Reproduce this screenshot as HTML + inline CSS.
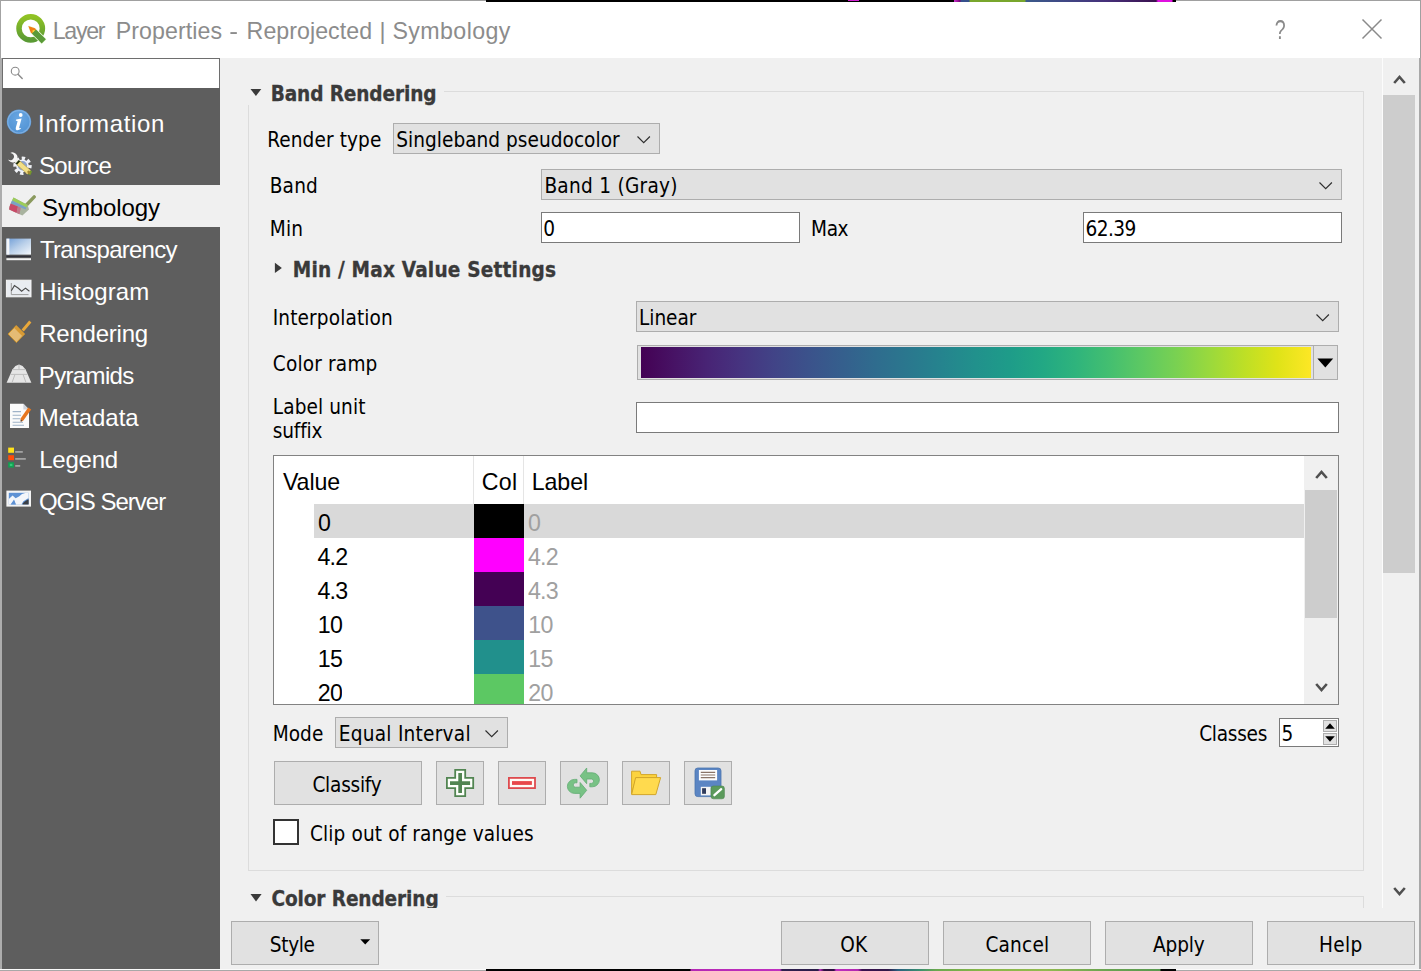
<!DOCTYPE html>
<html lang="en"><head><meta charset="utf-8"><title>Layer Properties - Reprojected | Symbology</title>
<style>
html,body{margin:0;padding:0}
body{width:1421px;height:971px;overflow:hidden;background:#f0f0f0;position:relative;font-family:"DejaVu Sans Condensed","DejaVu Sans","Liberation Sans",sans-serif;color:#000}
.a{position:absolute;box-sizing:border-box}
.t{position:absolute;white-space:nowrap;line-height:1}
.cb{background:#e1e1e1;border:1px solid #adadad}
.in{background:#fff;border:1px solid #7a7a7a}
svg{position:absolute;overflow:visible}
</style></head><body>
<!-- window frame -->
<div class="a" style="left:0;top:0;width:1421px;height:58px;background:#fff"></div>
<div class="a" style="left:0;top:0;width:1421px;height:1px;background:#a0a0a0"></div>
<div class="a" style="left:0;top:0;width:1px;height:58px;background:#a3a3a3"></div>
<div class="a" style="left:1420px;top:0;width:1px;height:58px;background:#a0a0a0"></div>
<div class="a" style="left:0;top:58px;width:2px;height:913px;background:#adadad"></div>
<div class="a" style="left:1419px;top:58px;width:2px;height:913px;background:#a8a8a8"></div>
<div class="a" style="left:0;top:969px;width:1421px;height:1px;background:#fafafa"></div>
<div class="a" style="left:0;top:970px;width:1421px;height:1px;background:#a8a8a8"></div>
<!-- desktop bleed strips -->
<div class="a" style="left:486px;top:0;width:690px;height:2px;background:linear-gradient(90deg,#000 0,#000 468px,#c3c 468px,#707 474px,#35508c 475px,#35508c 483px,#78a62c 484px,#78a62c 539px,#3b5a8a 540px,#3f4a86 574px,#46307a 620px,#3a104e 670px,#e010e0 672px,#e010e0 686px,#000 687px,#000 690px)"></div>
<div class="a" style="left:848px;top:0;width:11px;height:1px;background:#d020d0"></div>
<div class="a" style="left:486px;top:969px;width:690px;height:2px;background:linear-gradient(90deg,#000 0,#000 204px,#b428b4 205px,#c030c0 294px,#302050 296px,#2a1c48 332px,#c030c0 334px,#301040 338px,#2c1040 348px,#c030c0 350px,#b028b0 372px,#3a1050 376px,#301848 402px,#2a6080 412px,#3a9070 434px,#6aa850 450px,#8ab848 500px,#92ba50 560px,#6aa452 620px,#5a9a50 674px,#000 675px,#000 690px)"></div>

<!-- sidebar -->
<div class="a" style="left:2px;top:88px;width:218px;height:881px;background:#5e5e5e"></div>
<div class="a" style="left:2px;top:58px;width:218px;height:30px;background:#fff;border:1px solid #6e6e6e;border-bottom:none"></div>
<div class="a" style="left:2px;top:185px;width:218px;height:42px;background:#f0f0f0"></div>
<!-- search icon -->
<svg style="left:10px;top:66px" width="14" height="14" viewBox="0 0 14 14"><circle cx="5.2" cy="5.2" r="3.9" fill="none" stroke="#8a8a8a" stroke-width="1.1"/><path d="M8 8.2 L12.2 12.6" stroke="#8a8a8a" stroke-width="1.4" stroke-linecap="round"/></svg>

<!-- title bar icon + controls -->
<svg style="left:0;top:0" width="60" height="58" viewBox="0 0 60 58">
<defs><linearGradient id="gq" x1="0" y1="0" x2="0" y2="1"><stop offset="0" stop-color="#90c224"/><stop offset="1" stop-color="#5a9a34"/></linearGradient></defs>
<circle cx="30.7" cy="28.4" r="11.7" fill="none" stroke="url(#gq)" stroke-width="5.5"/>
<path d="M28.6 26.2 L34.96 28.32 L45.9 39.3 L41.7 43.5 L30.72 32.56 Z" fill="#5a9a38" stroke="#f4ffe6" stroke-width="1.3" stroke-linejoin="round"/>
<path d="M36.02 29.38 L45.9 39.3 L41.7 43.5 L31.78 33.62 Z" fill="#5a9a38"/>
<path d="M28.3 25.9 L34.96 28.32 L36.02 29.38 L31.78 33.62 L30.72 32.56 Z" fill="#f07f14"/>
<path d="M32.6 30.2 L35.2 30.2 L36.02 29.38 L31.78 33.62 L32.6 32.8 Z" fill="#f4e640"/>
</svg>
<svg style="left:1362px;top:19px" width="20" height="20" viewBox="0 0 20 20"><path d="M0.5 0.5 L19.5 19.5 M19.5 0.5 L0.5 19.5" stroke="#8a8a8a" stroke-width="1.5" fill="none"/></svg>

<!-- main scroll bar -->
<div class="a" style="left:1382px;top:58px;width:1px;height:850px;background:#fcfcfc"></div>
<div class="a" style="left:1383px;top:95px;width:32px;height:478px;background:#cdcdcd"></div>
<svg style="left:1393px;top:74px" width="13" height="11" viewBox="0 0 13 11"><path d="M1.2 9 L6.5 3 L11.8 9" fill="none" stroke="#505050" stroke-width="2.6"/></svg>
<svg style="left:1393px;top:886px" width="13" height="11" viewBox="0 0 13 11"><path d="M1.2 2 L6.5 8 L11.8 2" fill="none" stroke="#505050" stroke-width="2.6"/></svg>

<!-- group box 1 -->
<div class="a" style="left:248px;top:105px;width:1px;height:766px;background:#dcdcdc"></div>
<div class="a" style="left:444px;top:91px;width:920px;height:1px;background:#dcdcdc"></div>
<div class="a" style="left:1363px;top:91px;width:1px;height:780px;background:#dcdcdc"></div>
<div class="a" style="left:248px;top:870px;width:1116px;height:1px;background:#dcdcdc"></div>
<!-- group box 2 (clipped) -->
<div class="a" style="left:446px;top:896px;width:918px;height:1px;background:#dcdcdc"></div>
<div class="a" style="left:1363px;top:896px;width:1px;height:12px;background:#dcdcdc"></div>
<!-- collapse triangles -->
<svg style="left:250px;top:88px" width="12" height="9" viewBox="0 0 12 9"><path d="M0.5 0.9 L11.3 0.9 L5.9 8 Z" fill="#3a3a3a"/></svg>
<svg style="left:250px;top:893px" width="12" height="9" viewBox="0 0 12 9"><path d="M0.5 0.9 L11.6 0.9 L6 8.4 Z" fill="#3a3a3a"/></svg>
<svg style="left:274px;top:262px" width="9" height="12" viewBox="0 0 9 12"><path d="M0.9 0.7 L7.9 5.9 L0.9 11 Z" fill="#3a3a3a"/></svg>

<!-- render type combo -->
<div class="a cb" style="left:393px;top:123px;width:267px;height:31px"></div>
<svg style="left:637px;top:136px" width="14" height="8" viewBox="0 0 14 8"><path d="M0.5 0.5 L6.7 6.7 L12.9 0.5" fill="none" stroke="#2e2e2e" stroke-width="1.15"/></svg>
<!-- band combo -->
<div class="a cb" style="left:541px;top:169px;width:801px;height:31px"></div>
<svg style="left:1319px;top:182px" width="14" height="8" viewBox="0 0 14 8"><path d="M0.5 0.5 L6.7 6.7 L12.9 0.5" fill="none" stroke="#2e2e2e" stroke-width="1.15"/></svg>
<!-- min / max -->
<div class="a in" style="left:541px;top:212px;width:259px;height:31px"></div>
<div class="a in" style="left:1083px;top:212px;width:259px;height:31px"></div>
<!-- interpolation combo -->
<div class="a cb" style="left:636px;top:301px;width:703px;height:31px"></div>
<svg style="left:1316px;top:314px" width="14" height="8" viewBox="0 0 14 8"><path d="M0.5 0.5 L6.7 6.7 L12.9 0.5" fill="none" stroke="#2e2e2e" stroke-width="1.15"/></svg>
<!-- color ramp -->
<div class="a cb" style="left:637px;top:345px;width:701px;height:35px"></div>
<div class="a" style="left:641px;top:347px;width:670px;height:31px;background:linear-gradient(90deg,#440154 0%,#471365 5%,#482475 10%,#463480 15%,#414487 20%,#3b528b 25%,#355f8d 30%,#2f6c8e 35%,#2a788e 40%,#25848e 45%,#21918c 50%,#1e9c89 55%,#22a884 60%,#2fb47c 65%,#44bf70 70%,#5ec962 75%,#7ad151 80%,#9bd93c 85%,#bddf26 90%,#dfe318 95%,#fde725 100%)"></div>
<div class="a" style="left:1313px;top:346px;width:1px;height:33px;background:#adadad"></div>
<svg style="left:1317px;top:358px" width="17" height="10" viewBox="0 0 17 10"><path d="M0.4 0.6 L16.2 0.6 L8.3 9.4 Z" fill="#000"/></svg>
<!-- label unit suffix -->
<div class="a in" style="left:636px;top:402px;width:703px;height:31px"></div>

<!-- table -->
<div class="a" style="left:273px;top:455px;width:1066px;height:250px;background:#fff;border:1px solid #828282"></div>
<div class="a" style="left:473px;top:456px;width:1px;height:48px;background:#e5e5e5"></div>
<div class="a" style="left:523px;top:456px;width:1px;height:48px;background:#e5e5e5"></div>
<div class="a" style="left:314px;top:504px;width:990px;height:34px;background:#d9d9d9"></div>
<div class="a" style="left:474px;top:504px;width:50px;height:34px;background:#000"></div>
<div class="a" style="left:474px;top:538px;width:50px;height:34px;background:#ff00ff"></div>
<div class="a" style="left:474px;top:572px;width:50px;height:34px;background:#440154"></div>
<div class="a" style="left:474px;top:606px;width:50px;height:34px;background:#3e528b"></div>
<div class="a" style="left:474px;top:640px;width:50px;height:34px;background:#21908c"></div>
<div class="a" style="left:474px;top:674px;width:50px;height:30px;background:#5cc863"></div>
<!-- table scroll bar -->
<div class="a" style="left:1304px;top:456px;width:34px;height:248px;background:#f0f0f0"></div>
<div class="a" style="left:1305px;top:490px;width:32px;height:128px;background:#cdcdcd"></div>
<svg style="left:1315px;top:469px" width="13" height="11" viewBox="0 0 13 11"><path d="M1.2 9 L6.5 3 L11.8 9" fill="none" stroke="#505050" stroke-width="2.6"/></svg>
<svg style="left:1315px;top:682px" width="13" height="11" viewBox="0 0 13 11"><path d="M1.2 2 L6.5 8 L11.8 2" fill="none" stroke="#505050" stroke-width="2.6"/></svg>

<!-- mode combo -->
<div class="a cb" style="left:335px;top:717px;width:173px;height:31px"></div>
<svg style="left:485px;top:730px" width="14" height="8" viewBox="0 0 14 8"><path d="M0.5 0.5 L6.7 6.7 L12.9 0.5" fill="none" stroke="#2e2e2e" stroke-width="1.15"/></svg>
<!-- classes spin -->
<div class="a in" style="left:1279px;top:718px;width:60px;height:29px"></div>
<div class="a cb" style="left:1323px;top:720px;width:14px;height:12px"></div>
<div class="a cb" style="left:1323px;top:733px;width:14px;height:12px"></div>
<svg style="left:1325px;top:723px" width="10" height="6" viewBox="0 0 10 6"><path d="M0.2 5.8 L9.8 5.8 L5 0.3 Z" fill="#000"/></svg>
<svg style="left:1325px;top:736px" width="10" height="6" viewBox="0 0 10 6"><path d="M0.2 0.2 L9.8 0.2 L5 5.7 Z" fill="#000"/></svg>

<!-- buttons row -->
<div class="a cb" style="left:274px;top:761px;width:148px;height:44px"></div>
<div class="a cb" style="left:436px;top:761px;width:48px;height:44px"></div>
<div class="a cb" style="left:498px;top:761px;width:48px;height:44px"></div>
<div class="a cb" style="left:560px;top:761px;width:48px;height:44px"></div>
<div class="a cb" style="left:622px;top:761px;width:48px;height:44px"></div>
<div class="a cb" style="left:684px;top:761px;width:48px;height:44px"></div>
<!-- checkbox -->
<div class="a" style="left:273px;top:819px;width:26px;height:26px;background:#fff;border:2px solid #333"></div>

<!-- bottom buttons -->
<div class="a cb" style="left:231px;top:921px;width:148px;height:44px"></div>
<svg style="left:360px;top:939px" width="11" height="6" viewBox="0 0 11 6"><path d="M0.3 0.3 L10.2 0.3 L5.2 5.6 Z" fill="#000"/></svg>
<div class="a cb" style="left:781px;top:921px;width:148px;height:44px"></div>
<div class="a cb" style="left:943px;top:921px;width:148px;height:44px"></div>
<div class="a cb" style="left:1105px;top:921px;width:148px;height:44px"></div>
<div class="a cb" style="left:1267px;top:921px;width:148px;height:44px"></div>
<!-- sidebar icons -->
<svg style="left:6px;top:109px" width="26" height="26" viewBox="0 0 26 26">
<defs><radialGradient id="gi" cx="0.5" cy="0.35" r="0.75"><stop offset="0" stop-color="#6aa7e2"/><stop offset="0.7" stop-color="#5596d6"/><stop offset="1" stop-color="#4a86c4"/></radialGradient></defs>
<circle cx="13" cy="12.8" r="12.2" fill="url(#gi)"/>
<circle cx="13" cy="12.8" r="11.2" fill="none" stroke="#8fbbe8" stroke-width="1.2" opacity=".7"/>
<circle cx="14.7" cy="6" r="1.9" fill="#fff"/>
<path d="M10.2 10.6 L15.6 9.6 L13.2 18.6 Q13 19.8 14.6 19 L15 19.8 Q12.6 21.6 10.6 21.2 Q9.3 20.7 9.8 18.8 L11.6 12.2 L9.8 11.6 Z" fill="#fff"/>
</svg>
<svg style="left:4px;top:148px;filter:blur(0.3px)" width="32" height="32" viewBox="0 0 32 32">
<circle cx="18.5" cy="17.8" r="7.5" fill="none" stroke="#f0f2f6" stroke-width="3.4" stroke-dasharray="3.3 2.59" stroke-dashoffset="1"/>
<circle cx="18.5" cy="17.8" r="6.4" fill="#eef1f8"/>
<circle cx="18.5" cy="17.8" r="4.7" fill="#8ea4cc"/>
<path d="M11.2 12 L13.8 14.4" stroke="#ecece4" stroke-width="3.8"/>
<path d="M6.3 4.9 A5 5 0 1 1 4 11.5 A3.7 3.7 0 1 0 6.3 4.9 Z" fill="#f6f6f6"/>
<path d="M13.2 13.8 L15.2 15.6" stroke="#26340e" stroke-width="4.8"/>
<path d="M14.6 15.1 L25.2 24.5" stroke="#c4ae54" stroke-width="5.4"/>
<path d="M14.8 15.3 L25 24.3" stroke="#f2df86" stroke-width="4.2"/>
<path d="M25 24.3 L27.2 25.4" stroke="#6c9a2c" stroke-width="4.2"/>
<ellipse cx="24.9" cy="24.3" rx="1.3" ry="1.9" transform="rotate(-42 24.9 24.3)" fill="#a4862e"/>
</svg>
<svg style="left:8px;top:195px;filter:blur(0.35px)" width="28" height="22" viewBox="0 0 28 22">
<path d="M18.2 10.2 L26.2 1.9" stroke="#8b9a5e" stroke-width="3.4" stroke-linecap="round"/>
<path d="M5.5 2.5 L19.7 10 L21 14.5 L14.4 20.6 L1.1 14.5 L1.5 11.8 Z" fill="#a9b39f"/>
<path d="M5.5 2.5 L19.7 10 L18.5 12.6 L4 5.6 Z" fill="#9ccc5a"/>
<path d="M4 5.6 L18.5 12.6 L17.6 14.6 L2.6 8.6 Z" fill="#7aa2c6"/>
<path d="M2.6 8.6 L10 11.6 L8.6 17.9 L1.1 14.5 L1.5 11.8 Z" fill="#c94a68"/>
<path d="M10 11.6 L12.8 12.7 L11.5 19.2 L8.6 17.9 Z" fill="#c0788a"/>
</svg>
<svg style="left:6px;top:238px" width="26" height="24" viewBox="0 0 26 24">
<defs><linearGradient id="gt" x1="0" y1="0" x2="1" y2="1"><stop offset="0" stop-color="#6f9dd6"/><stop offset=".5" stop-color="#b9cfe9"/><stop offset="1" stop-color="#f4f7fb"/></linearGradient></defs>
<rect x="0.4" y="0.6" width="24.6" height="16" fill="url(#gt)"/>
<rect x="0.4" y="0.6" width="3" height="16" fill="#f4f6fa"/>
<rect x="0.4" y="17.6" width="24.6" height="1.6" fill="#2e2e38"/>
<rect x="0.4" y="20.2" width="24.6" height="2" fill="#f2f2f2"/>
</svg>
<svg style="left:6px;top:280px" width="26" height="18" viewBox="0 0 26 18">
<rect x="0.4" y="0.2" width="24.6" height="16.6" fill="#e9ecf1"/>
<rect x="0.4" y="0.2" width="24.6" height="16.6" fill="none" stroke="#f6f6f6" stroke-width="1"/>
<path d="M5.3 3 L5.3 14.6 L22.5 14.6" fill="none" stroke="#9a9a9a" stroke-width="1"/>
<path d="M5.3 10.8 L8.4 5.6 L12.4 8.3 L15.6 11.2 L19.5 8.1 L23.4 11.2" fill="none" stroke="#4a4a4a" stroke-width="1.1"/>
</svg>
<svg style="left:7px;top:319px" width="26" height="26" viewBox="0 0 26 26">
<path d="M14.6 10.6 L22.2 1.6 L24.4 3.4 L16.8 12.6 Z" fill="#e9a83a"/>
<path d="M9.2 6.6 L17.6 15 L9.4 23.6 L1 15 Z" fill="#e4bb74" stroke="#c8902c" stroke-width="1"/>
<path d="M9.2 6.6 L17.6 15 L15.4 17.2 L7 8.8 Z" fill="#d79a34"/>
</svg>
<svg style="left:6px;top:364px" width="26" height="20" viewBox="0 0 26 20">
<path d="M0.6 18.8 L6.4 5.6 L9.4 2 L13 0.6 L16.6 2 L19.6 5.6 L25.4 18.8 Z" fill="#e6e6e6"/>
<path d="M4.4 10.4 L21.6 10.4 M6.4 5.6 L19.6 5.6 M9 10.4 L6 18.6 M17 10.4 L20 18.6 M13 1 L13 5.6" stroke="#bdbdbd" stroke-width="1" fill="none"/>
</svg>
<svg style="left:9px;top:403px" width="24" height="26" viewBox="0 0 24 26">
<path d="M1 0.8 L14.4 0.8 L20 6.4 L20 25 L1 25 Z" fill="#fbfbfb"/>
<path d="M14.4 0.8 L14.4 6.4 L20 6.4 Z" fill="#cfd3da"/>
<path d="M3.6 8.6 L12 8.6 M3.6 12.2 L12 12.2 M3.6 15.8 L11 15.8 M3.6 19.2 L14 19.2 M3.6 22.2 L15 22.2" stroke="#9fb2c8" stroke-width="1.1"/>
<path d="M19.2 4.6 L22.2 6.6 L14.4 17.4 L11.8 18.8 L11.6 15.6 Z" fill="#e8761e"/>
<path d="M11.8 18.8 L11.6 16.6 L13.4 17.8 Z" fill="#444"/>
</svg>
<svg style="left:8px;top:447px" width="19" height="21" viewBox="0 0 19 21">
<rect x="0.2" y="0.6" width="5.8" height="5.2" fill="#ffe21a"/>
<rect x="0.2" y="8.2" width="5.8" height="5" fill="#ff4d0a"/>
<rect x="0.2" y="15.2" width="5.8" height="5.4" fill="#12a152"/>
<rect x="1.8" y="16.8" width="2.6" height="2.2" fill="#35c878"/>
<rect x="7.2" y="4" width="7.6" height="1.8" fill="#a2a2a2"/>
<rect x="7.2" y="11" width="10.6" height="1.8" fill="#a2a2a2"/>
<rect x="7.2" y="18" width="5" height="1.8" fill="#a2a2a2"/>
</svg>
<svg style="left:6px;top:490px" width="26" height="18" viewBox="0 0 26 18">
<rect x="0.4" y="0.6" width="24.6" height="16" fill="#f4f4f4"/>
<rect x="2.8" y="2.8" width="19.8" height="11.6" fill="#5f92d4"/>
<path d="M2.8 9 L6.6 5.4 L9.6 8.2 L13 6.6 L16 4 L20 2.8 L22.6 2.8 L22.6 8 L17.4 11.2 L15.4 14.4 L9.6 14.4 L8 10.6 L5 14.4 L2.8 14.4 Z" fill="#f4f6fa"/>
<path d="M4.6 14.4 L8 9.4 L10 14.4 Z" fill="#5f92d4"/>
<path d="M22.6 9.2 L22.6 14.4 L16.4 14.4 Q17.4 11.4 22.6 9.2 Z" fill="#3b3f46"/>
</svg>
<!-- tool button icons -->
<svg style="left:446px;top:769px" width="28" height="28" viewBox="0 0 28 28">
<path d="M8.3 0 H20.1 V8 H28.1 V20 H20.1 V28 H8.3 V20 H0 V8 H8.3 Z" fill="#528552"/>
<path d="M10.1 1.8 H18.3 V9.8 H26.3 V18.2 H18.3 V26.2 H10.1 V18.2 H1.8 V9.8 H10.1 Z" fill="#fdfffb"/>
<path d="M12.3 4 H16 V12.2 H24.1 V15.9 H16 V24 H12.3 V15.9 H4 V12.2 H12.3 Z" fill="#528552"/>
</svg>
<svg style="left:508px;top:777px" width="28" height="12" viewBox="0 0 28 12">
<rect x="0" y="0" width="27.9" height="12" fill="#de4a4e"/>
<rect x="1.8" y="1.8" width="24.3" height="8.4" fill="#fffaf5"/>
<rect x="4" y="4.1" width="19.9" height="3.8" fill="#e8474a"/>
</svg>
<svg style="left:562px;top:763px" width="44" height="40" viewBox="0 0 44 40">
<g transform="translate(21.4,20.1)" fill="#78c285" stroke="#62ac73" stroke-width="0.8" stroke-linejoin="round">
<path d="M-3.3 -7.2 L3.3 -15.1 L3.3 -10.3 L9 -10.3 A7 7 0 0 1 9 3.7 L6.4 3.7 L6.4 0.3 L8 0.3 A2.2 2.2 0 0 0 8 -4.1 L3.3 -4.1 L3.3 0.6 Z"/>
<path transform="rotate(180)" d="M-3.3 -7.2 L3.3 -15.1 L3.3 -10.3 L9 -10.3 A7 7 0 0 1 9 3.7 L6.4 3.7 L6.4 0.3 L8 0.3 A2.2 2.2 0 0 0 8 -4.1 L3.3 -4.1 L3.3 0.6 Z"/>
</g>
</svg>
<svg style="left:630px;top:770px" width="32" height="26" viewBox="0 0 32 26">
<path d="M1.6 24 L1.6 1.2 L10 1.2 L11 4.6 L26.6 4.6 L26.6 8 L6 8 Z" fill="#fcd33e" stroke="#d2a62a" stroke-width="1"/>
<path d="M5.6 7.6 L30.6 7.6 L25.8 24.6 L1.6 24.6 Z" fill="#ffda4e" stroke="#d2a62a" stroke-width="1"/>
</svg>
<svg style="left:694px;top:767px" width="32" height="33" viewBox="0 0 32 33">
<rect x="1" y="1" width="26" height="28.6" rx="2.8" fill="#5b85c3" stroke="#4a73ad" stroke-width=".8"/>
<rect x="4.9" y="3" width="18.2" height="10.4" fill="#fdfdfd"/>
<path d="M6.8 5.4 H21.2 M6.8 8 H21.2 M6.8 10.6 H21.2" stroke="#8a7468" stroke-width="1.1"/>
<rect x="6.8" y="19.8" width="10" height="8.6" fill="#f4f4f4"/>
<rect x="8.1" y="21.2" width="3.9" height="5.6" fill="#2f3b5c"/>
<rect x="17" y="19" width="13.4" height="12.8" rx="2.4" fill="#5b9a5b" stroke="#4d874d" stroke-width=".6"/>
<path d="M20.4 28.2 L27.2 22.2" stroke="#fff" stroke-width="2.3" stroke-linecap="round"/>
</svg>

<div class="t" style="left:52.80px;top:20.00px;font-size:23.2px;letter-spacing:-1.345px;color:#8c8c8c;font-family:'Liberation Sans','DejaVu Sans',sans-serif">Layer</div>
<div class="t" style="left:115.80px;top:20.00px;font-size:23.2px;letter-spacing:0.068px;color:#8c8c8c;font-family:'Liberation Sans','DejaVu Sans',sans-serif">Properties</div>
<div class="t" style="left:229.40px;top:20.00px;font-size:23.2px;letter-spacing:0.000px;color:#8c8c8c;font-family:'Liberation Sans','DejaVu Sans',sans-serif;transform:scaleX(1.133);transform-origin:-1.00px 0">-</div>
<div class="t" style="left:246.60px;top:20.00px;font-size:23.2px;letter-spacing:0.047px;color:#8c8c8c;font-family:'Liberation Sans','DejaVu Sans',sans-serif">Reprojected</div>
<div class="t" style="left:379.60px;top:20.00px;font-size:23.2px;letter-spacing:0.000px;color:#8c8c8c;font-family:'Liberation Sans','DejaVu Sans',sans-serif">|</div>
<div class="t" style="left:392.50px;top:20.00px;font-size:23.2px;letter-spacing:0.399px;color:#8c8c8c;font-family:'Liberation Sans','DejaVu Sans',sans-serif">Symbology</div>
<div class="t" style="left:1275.00px;top:17.00px;font-size:27px;letter-spacing:0.000px;color:#8a8a8a;font-family:'Liberation Sans','DejaVu Sans',sans-serif;transform:scaleX(0.729);transform-origin:-1.00px 0">?</div>
<div class="t" style="left:37.90px;top:112.00px;font-size:24px;letter-spacing:0.639px;color:#fff;font-family:'Liberation Sans','DejaVu Sans',sans-serif">Information</div>
<div class="t" style="left:38.90px;top:154.00px;font-size:24px;letter-spacing:-0.619px;color:#fff;font-family:'Liberation Sans','DejaVu Sans',sans-serif">Source</div>
<div class="t" style="left:42.10px;top:196.00px;font-size:24px;letter-spacing:-0.090px;color:#000;font-family:'Liberation Sans','DejaVu Sans',sans-serif">Symbology</div>
<div class="t" style="left:39.90px;top:238.00px;font-size:24px;letter-spacing:-0.758px;color:#fff;font-family:'Liberation Sans','DejaVu Sans',sans-serif">Transparency</div>
<div class="t" style="left:39.20px;top:280.00px;font-size:24px;letter-spacing:0.092px;color:#fff;font-family:'Liberation Sans','DejaVu Sans',sans-serif">Histogram</div>
<div class="t" style="left:39.20px;top:322.00px;font-size:24px;letter-spacing:-0.224px;color:#fff;font-family:'Liberation Sans','DejaVu Sans',sans-serif">Rendering</div>
<div class="t" style="left:38.80px;top:364.00px;font-size:24px;letter-spacing:-0.646px;color:#fff;font-family:'Liberation Sans','DejaVu Sans',sans-serif">Pyramids</div>
<div class="t" style="left:38.80px;top:406.00px;font-size:24px;letter-spacing:-0.031px;color:#fff;font-family:'Liberation Sans','DejaVu Sans',sans-serif">Metadata</div>
<div class="t" style="left:39.20px;top:448.00px;font-size:24px;letter-spacing:-0.228px;color:#fff;font-family:'Liberation Sans','DejaVu Sans',sans-serif">Legend</div>
<div class="t" style="left:38.90px;top:490.00px;font-size:24px;letter-spacing:-1.008px;color:#fff;font-family:'Liberation Sans','DejaVu Sans',sans-serif">QGIS Server</div>
<div class="t" style="left:270.70px;top:84.00px;font-size:20.6px;letter-spacing:-0.112px;color:#3a3a3a;font-weight:bold;-webkit-text-stroke:0.3px #3a3a3a">Band Rendering</div>
<div class="t" style="left:267.20px;top:130.00px;font-size:20.6px;letter-spacing:0.106px;color:#000">Render type</div>
<div class="t" style="left:396.30px;top:130.00px;font-size:20.6px;letter-spacing:0.026px;color:#000">Singleband pseudocolor</div>
<div class="t" style="left:269.70px;top:176.00px;font-size:20.6px;letter-spacing:0.197px;color:#000">Band</div>
<div class="t" style="left:544.40px;top:176.00px;font-size:20.6px;letter-spacing:0.272px;color:#000">Band 1 (Gray)</div>
<div class="t" style="left:269.70px;top:219.00px;font-size:20.6px;letter-spacing:0.232px;color:#000">Min</div>
<div class="t" style="left:543.30px;top:219.00px;font-size:20.6px;letter-spacing:0.000px;color:#000">0</div>
<div class="t" style="left:811.10px;top:219.00px;font-size:20.6px;letter-spacing:-0.421px;color:#000">Max</div>
<div class="t" style="left:1085.40px;top:219.00px;font-size:20.6px;letter-spacing:-0.509px;color:#000">62.39</div>
<div class="t" style="left:292.80px;top:260.00px;font-size:20.6px;letter-spacing:0.197px;color:#3a3a3a;font-weight:bold;-webkit-text-stroke:0.3px #3a3a3a">Min / Max Value Settings</div>
<div class="t" style="left:272.80px;top:308.00px;font-size:20.6px;letter-spacing:0.115px;color:#000">Interpolation</div>
<div class="t" style="left:639.10px;top:308.00px;font-size:20.6px;letter-spacing:-0.073px;color:#000">Linear</div>
<div class="t" style="left:272.80px;top:354.00px;font-size:20.6px;letter-spacing:0.171px;color:#000">Color ramp</div>
<div class="t" style="left:272.80px;top:397.00px;font-size:20.6px;letter-spacing:0.099px;color:#000">Label unit</div>
<div class="t" style="left:272.80px;top:421.00px;font-size:20.6px;letter-spacing:-0.163px;color:#000">suffix</div>
<div class="t" style="left:283.00px;top:471.00px;font-size:23.2px;letter-spacing:-0.122px;color:#000;font-family:'Liberation Sans','DejaVu Sans',sans-serif">Value</div>
<div class="t" style="left:481.70px;top:471.00px;font-size:23.2px;letter-spacing:0.329px;color:#000;font-family:'Liberation Sans','DejaVu Sans',sans-serif">Col</div>
<div class="t" style="left:531.70px;top:471.00px;font-size:23.2px;letter-spacing:-0.071px;color:#000;font-family:'Liberation Sans','DejaVu Sans',sans-serif">Label</div>
<div class="t" style="left:318.00px;top:512.00px;font-size:23.2px;letter-spacing:0.000px;color:#000;font-family:'Liberation Sans','DejaVu Sans',sans-serif">0</div>
<div class="t" style="left:527.90px;top:512.00px;font-size:23.2px;letter-spacing:0.000px;color:#a0a0a0;font-family:'Liberation Sans','DejaVu Sans',sans-serif">0</div>
<div class="t" style="left:317.40px;top:546.00px;font-size:23.2px;letter-spacing:-0.769px;color:#000;font-family:'Liberation Sans','DejaVu Sans',sans-serif">4.2</div>
<div class="t" style="left:527.90px;top:546.00px;font-size:23.2px;letter-spacing:-0.769px;color:#a0a0a0;font-family:'Liberation Sans','DejaVu Sans',sans-serif">4.2</div>
<div class="t" style="left:317.40px;top:580.00px;font-size:23.2px;letter-spacing:-0.769px;color:#000;font-family:'Liberation Sans','DejaVu Sans',sans-serif">4.3</div>
<div class="t" style="left:527.90px;top:580.00px;font-size:23.2px;letter-spacing:-0.769px;color:#a0a0a0;font-family:'Liberation Sans','DejaVu Sans',sans-serif">4.3</div>
<div class="t" style="left:317.70px;top:614.00px;font-size:23.2px;letter-spacing:-0.696px;color:#000;font-family:'Liberation Sans','DejaVu Sans',sans-serif">10</div>
<div class="t" style="left:528.20px;top:614.00px;font-size:23.2px;letter-spacing:-0.696px;color:#a0a0a0;font-family:'Liberation Sans','DejaVu Sans',sans-serif">10</div>
<div class="t" style="left:317.70px;top:648.00px;font-size:23.2px;letter-spacing:-0.696px;color:#000;font-family:'Liberation Sans','DejaVu Sans',sans-serif">15</div>
<div class="t" style="left:528.20px;top:648.00px;font-size:23.2px;letter-spacing:-0.696px;color:#a0a0a0;font-family:'Liberation Sans','DejaVu Sans',sans-serif">15</div>
<div class="t" style="left:317.70px;top:682.00px;font-size:23.2px;letter-spacing:-0.696px;color:#000;font-family:'Liberation Sans','DejaVu Sans',sans-serif;height:21.50px;overflow:hidden">20</div>
<div class="t" style="left:528.20px;top:682.00px;font-size:23.2px;letter-spacing:-0.696px;color:#a0a0a0;font-family:'Liberation Sans','DejaVu Sans',sans-serif;height:21.50px;overflow:hidden">20</div>
<div class="t" style="left:272.70px;top:724.00px;font-size:20.6px;letter-spacing:0.038px;color:#000">Mode</div>
<div class="t" style="left:338.80px;top:724.00px;font-size:20.6px;letter-spacing:0.247px;color:#000">Equal Interval</div>
<div class="t" style="left:1199.20px;top:724.00px;font-size:20.6px;letter-spacing:-0.275px;color:#000">Classes</div>
<div class="t" style="left:1281.50px;top:724.00px;font-size:20.6px;letter-spacing:0.000px;color:#000">5</div>
<div class="t" style="left:312.40px;top:775.00px;font-size:20.6px;letter-spacing:-0.236px;color:#000">Classify</div>
<div class="t" style="left:310.00px;top:824.00px;font-size:20.6px;letter-spacing:0.121px;color:#000">Clip out of range values</div>
<div class="t" style="left:271.40px;top:889.00px;font-size:20.6px;letter-spacing:-0.109px;color:#3a3a3a;font-weight:bold;-webkit-text-stroke:0.3px #3a3a3a;height:18.50px;overflow:hidden">Color Rendering</div>
<div class="t" style="left:269.80px;top:935.00px;font-size:20.6px;letter-spacing:-0.334px;color:#000">Style</div>
<div class="t" style="left:840.30px;top:935.00px;font-size:20.6px;letter-spacing:0.119px;color:#000">OK</div>
<div class="t" style="left:985.40px;top:935.00px;font-size:20.6px;letter-spacing:0.194px;color:#000">Cancel</div>
<div class="t" style="left:1153.10px;top:935.00px;font-size:20.6px;letter-spacing:-0.187px;color:#000">Apply</div>
<div class="t" style="left:1319.10px;top:935.00px;font-size:20.6px;letter-spacing:0.337px;color:#000">Help</div>
</body></html>
